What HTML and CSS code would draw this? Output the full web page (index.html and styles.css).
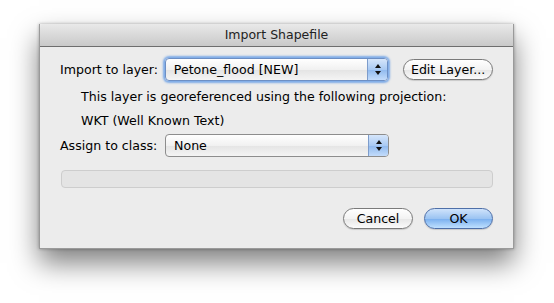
FILE: index.html
```html
<!DOCTYPE html>
<html lang="en">
<head>
    <meta charset="UTF-8">
    <title>Import Shapefile</title>
    <link rel="stylesheet" href="styles.css">
</head>
<body>

    <div class="window">
        <div class="titlebar">Import Shapefile</div>

        <div class="content">
            <!-- Layer row -->
            <div class="row">
                <label class="label">Import to layer:</label>
                <div class="popup focused">
                    <span class="popup-text">Petone_flood [NEW]</span>
                    <span class="stepper"><span class="arrow up"></span><span class="arrow down"></span></span>
                </div>
                <button class="btn edit-btn">Edit Layer...</button>
            </div>

            <p class="info first">This layer is georeferenced using the following projection:</p>
            <p class="info">WKT (Well Known Text)</p>

            <!-- Class row -->
            <div class="row">
                <label class="label">Assign to class:</label>
                <div class="popup">
                    <span class="popup-text">None</span>
                    <span class="stepper"><span class="arrow up"></span><span class="arrow down"></span></span>
                </div>
            </div>

            <div class="progress"></div>

            <div class="buttons">
                <button class="btn cancel-btn">Cancel</button>
                <button class="btn ok-btn">OK</button>
            </div>
        </div>
    </div>

</body>
</html>
```

FILE: styles.css
```css
/* General Styling */
html, body {
    height: 100%;
}

body {
    margin: 0;
    padding-top: 24px;
    box-sizing: border-box;
    background: white;
    font-family: 'DejaVu Sans', sans-serif;
    font-size: 12.6px;
    color: #000;
}

/* Window */
.window {
    width: 473px;
    margin-left: 39px;
    background: #ececec;
    border: 1px solid #9a9a9a;
    border-top: none;
    box-shadow: 0px 14px 26px rgba(0, 0, 0, 0.5), 0px 0px 3px rgba(0, 0, 0, 0.3);
}

.titlebar {
    height: 22px;
    line-height: 22px;
    text-align: center;
    font-size: 12.5px;
    color: #222;
    background: linear-gradient(#e9e9e9, #c9c9c9);
    border-bottom: 1px solid #6e6e6e;
    border-radius: 4px 4px 0 0;
}

.content {
    padding: 10px 20px 19px 20px;
}

.row {
    display: flex;
    align-items: center;
    height: 24px;
}

.label {
    width: 105px;
}

/* Popup buttons */
.popup {
    display: flex;
    align-items: center;
    width: 222px;
    height: 21px;
    border: 1px solid #8d8d8d;
    border-radius: 4px;
    background: linear-gradient(#ffffff, #f1f1f1 50%, #e4e4e4 51%, #f4f4f4);
    overflow: hidden;
}

.popup.focused {
    box-shadow: 0px 0px 2px 2px rgba(90, 150, 230, 0.75);
    border-color: #6d8fc4;
}

.popup-text {
    flex: 1;
    padding-left: 8px;
}

.stepper {
    width: 19px;
    height: 100%;
    border-left: 1px solid #7d9ccb;
    background: linear-gradient(#d6e6fb, #a9caf3 50%, #8fb9ee 51%, #c3dcfb);
    display: flex;
    flex-direction: column;
    align-items: center;
    justify-content: center;
    gap: 3px;
}

.arrow {
    width: 0;
    height: 0;
    border-left: 3px solid transparent;
    border-right: 3px solid transparent;
}

.arrow.up {
    border-bottom: 4px solid #111;
}

.arrow.down {
    border-top: 4px solid #111;
}

.info {
    margin: 0;
    padding-left: 21px;
    height: 24px;
    line-height: 24px;
}

.info.first {
    margin-top: 4px;
}

.progress {
    height: 16px;
    margin: 13px 0 0 1px;
    background: #e4e4e4;
    border: 1px solid #cdcdcd;
    border-radius: 4px;
}

/* Buttons */
.btn {
    font-family: 'DejaVu Sans', sans-serif;
    font-size: 12.6px;
    color: #000;
    height: 21px;
    padding: 0;
    border: 1px solid #7a7a7a;
    border-radius: 11px;
    background: linear-gradient(#ffffff, #f3f3f3 50%, #e6e6e6 51%, #fbfbfb);
    box-shadow: 0px 1px 1px rgba(0, 0, 0, 0.15);
}

.edit-btn {
    width: 90px;
    margin-left: 15px;
}

.buttons {
    display: flex;
    justify-content: flex-end;
    gap: 11px;
    margin-top: 20px;
}

.cancel-btn {
    width: 70px;
}

.ok-btn {
    width: 69px;
    border-color: #4e6fa8;
    background: linear-gradient(#cfe3fb, #9cc4f2 50%, #78aeee 51%, #bfe0ff);
}
```
